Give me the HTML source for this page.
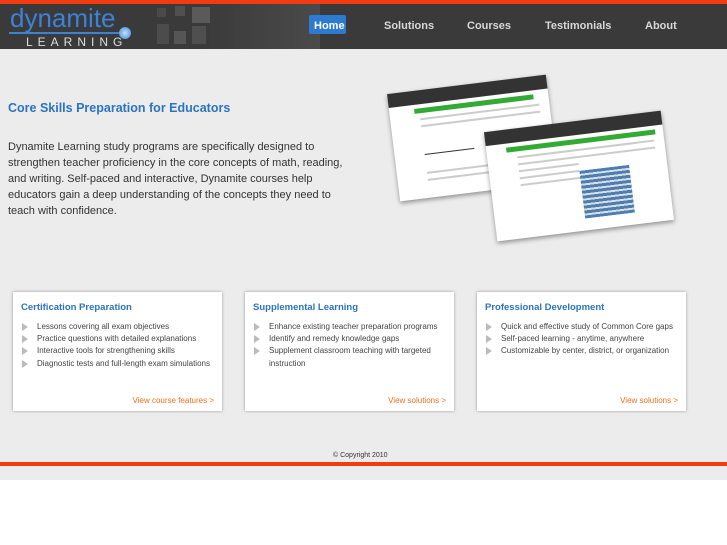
<!DOCTYPE html>
<html><head><meta charset="utf-8"><style>
*{margin:0;padding:0;box-sizing:border-box}
body{width:727px;height:545px;background:#fff;font-family:"Liberation Sans",sans-serif;position:relative;overflow:hidden}
.top{position:absolute;left:0;top:0;width:727px;height:4px;background:#f03c10}
.hdr{position:absolute;left:0;top:4px;width:727px;height:45px;background:#3a3a3a}
.main{position:absolute;left:0;top:49px;width:727px;height:431px;background:#ececec}
.nav a{position:absolute;top:16px;color:#d8d8d8;font-size:11px;font-weight:bold;text-decoration:none}
.box{position:absolute;top:292px;width:209px;height:119px;background:#fff;box-shadow:0 0 3px rgba(0,0,0,.35)}
.box h3{font-size:9.5px;color:#2b73c4;margin:10px 0 0 8px}
.box ul{list-style:none;margin:8px 0 0 9px}
.box li{font-size:8px;color:#444;line-height:12.2px;padding-left:15px;position:relative}
.box li:before{content:"";position:absolute;left:0;top:2px;border-left:6px solid #bbb;border-top:4px solid transparent;border-bottom:4px solid transparent}
.box .more{position:absolute;right:8px;bottom:6px;font-size:8px;color:#f07020}
.sq{position:absolute;background:#555}
.ln{height:2px;background:#ccc;margin:5px 10px 0 30px}
</style></head><body>
<div class="top"></div>
<div class="hdr">
<div style="position:absolute;left:200px;top:0;width:120px;height:45px;background:linear-gradient(90deg,#3a3a3a,#4a4a4a)"></div>
<div class="sq" style="left:157px;top:4px;width:9px;height:9px;background:#4a4a4a"></div>
<div class="sq" style="left:175px;top:2px;width:10px;height:10px;background:#505050"></div>
<div class="sq" style="left:192px;top:3px;width:18px;height:16px;background:#5a5a5a"></div>
<div class="sq" style="left:157px;top:20px;width:12px;height:20px;background:#4c4c4c"></div>
<div class="sq" style="left:174px;top:27px;width:12px;height:13px;background:#555"></div>
<div class="sq" style="left:192px;top:22px;width:14px;height:18px;background:#4f4f4f"></div>
<div style="position:absolute;left:10px;top:1px;font-size:26px;color:#3d82d6;line-height:26px">dynamite</div>
<div style="position:absolute;left:9px;top:28px;width:112px;height:1.5px;background:#3d82d6"></div>
<div style="position:absolute;left:119px;top:23px;width:12px;height:12px;border-radius:50%;background:radial-gradient(#bfe3ff,#3d82d6)"></div>
<div style="position:absolute;left:26px;top:31px;font-size:12px;color:#ddd;letter-spacing:5px">LEARNING</div>
<div class="nav">
<div style="position:absolute;left:309px;top:11px;width:37px;height:19px;background:#2d7ad0;border-radius:2px"></div>
<a style="left:314px;color:#fff">Home</a><a style="left:384px">Solutions</a><a style="left:467px">Courses</a><a style="left:545px">Testimonials</a><a style="left:645px">About</a>
</div></div>
<div class="main">
<div style="position:absolute;left:8px;top:52px;font-size:12.5px;font-weight:bold;color:#2b73c4">Core Skills Preparation for Educators</div>
<div style="position:absolute;left:8px;top:90px;width:340px;font-size:11px;line-height:16px;color:#333">Dynamite Learning study programs are specifically designed to strengthen teacher proficiency in the core concepts of math, reading, and writing. Self-paced and interactive, Dynamite courses help educators gain a deep understanding of the concepts they need to teach with confidence.</div>
<div style="position:absolute;left:393px;top:35px;width:160px;height:108px;background:#fff;transform:rotate(-7deg);box-shadow:0 2px 5px rgba(0,0,0,.4)">
<div style="height:14px;background:#333"></div><div style="margin:4px 0 0 25px;height:5px;background:#3a3;width:120px"></div>
<div class="ln"></div><div class="ln"></div>
<div style="position:absolute;left:30px;top:40px;width:50px;height:25px;border-bottom:1px solid #333"></div>
<div class="ln" style="margin-top:45px"></div><div class="ln"></div></div>
<div style="position:absolute;left:490px;top:72px;width:178px;height:110px;background:#fff;transform:rotate(-7deg);box-shadow:0 2px 5px rgba(0,0,0,.4)">
<div style="height:14px;background:#333"></div><div style="margin:4px 0 0 20px;height:5px;background:#3a3;width:150px"></div>
<div class="ln"></div><div class="ln"></div><div class="ln" style="width:60px"></div><div class="ln" style="width:60px"></div><div class="ln" style="width:60px"></div>
<div style="position:absolute;left:90px;top:50px;width:50px;height:48px;background:repeating-linear-gradient(#4a7fb5 0 3px,#ddd 3px 5px)"></div></div>
</div>
<div class="box" style="left:13px"><h3>Certification Preparation</h3><ul><li>Lessons covering all exam objectives</li><li>Practice questions with detailed explanations</li><li>Interactive tools for strengthening skills</li><li>Diagnostic tests and full-length exam simulations</li></ul><div class="more">View course features &gt;</div></div>
<div class="box" style="left:245px"><h3>Supplemental Learning</h3><ul><li>Enhance existing teacher preparation programs</li><li>Identify and remedy knowledge gaps</li><li>Supplement classroom teaching with targeted instruction</li></ul><div class="more">View solutions &gt;</div></div>
<div class="box" style="left:477px"><h3>Professional Development</h3><ul><li>Quick and effective study of Common Core gaps</li><li>Self-paced learning - anytime, anywhere</li><li>Customizable by center, district, or organization</li></ul><div class="more">View solutions &gt;</div></div>
<div style="position:absolute;left:333px;top:452px;font-size:7px;color:#333">© Copyright 2010</div>
<div style="position:absolute;left:0;top:462px;width:727px;height:4px;background:#f03c10"></div>
</body></html>
